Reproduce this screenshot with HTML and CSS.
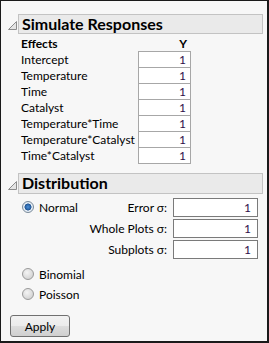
FILE: index.html
```html
<!DOCTYPE html>
<html>
<head>
<meta charset="utf-8">
<link rel="stylesheet" href="styles.css">
</head>
<body>
<div class="window">
  <div class="sec-head">
    <svg class="disclosure" width="9" height="9" viewBox="0 0 9 9"><polygon points="8.5,0.5 8.5,8.5 0.5,8.5" fill="#e4e4e4" stroke="#8c8c8c" stroke-width="1"/></svg>
    <div class="sec-title">Simulate Responses</div>
  </div>
  <div class="effects">
    <div class="eff-label bold">Effects</div><div class="eff-ycol bold">Y</div>
    <div class="eff-label">Intercept</div><div class="cell first">1</div>
    <div class="eff-label">Temperature</div><div class="cell">1</div>
    <div class="eff-label">Time</div><div class="cell">1</div>
    <div class="eff-label">Catalyst</div><div class="cell">1</div>
    <div class="eff-label">Temperature*Time</div><div class="cell">1</div>
    <div class="eff-label">Temperature*Catalyst</div><div class="cell">1</div>
    <div class="eff-label">Time*Catalyst</div><div class="cell">1</div>
  </div>
  <div class="sec-head dist-head">
    <svg class="disclosure" width="9" height="9" viewBox="0 0 9 9"><polygon points="8.5,0.5 8.5,8.5 0.5,8.5" fill="#e4e4e4" stroke="#8c8c8c" stroke-width="1"/></svg>
    <div class="sec-title">Distribution</div>
  </div>
  <div class="dist">
    <div class="radio-row normal"><span class="radio on"></span><span>Normal</span></div>
    <div class="params">
      <div class="p-label">Error σ:</div><div class="p-input">1</div>
      <div class="p-label">Whole Plots σ:</div><div class="p-input">1</div>
      <div class="p-label">Subplots σ:</div><div class="p-input">1</div>
    </div>
  </div>
  <div class="radio-row"><span class="radio"></span><span>Binomial</span></div>
  <div class="radio-row"><span class="radio"></span><span>Poisson</span></div>
  <div class="actions"><button class="apply">Apply</button></div>
</div>
</body>
</html>
```
FILE: styles.css
```css
html, body { margin: 0; padding: 0; }
body { background: #f7f7f7; }
.window {
  box-sizing: border-box;
  width: 269px;
  height: 343px;
  border-top: 1px solid #1a1a1a;
  border-left: 1px solid #1a1a1a;
  border-right: 2px solid #1a1a1a;
  border-bottom: 2px solid #1a1a1a;
  background: #f7f7f7;
  padding: 13px 4px 0 0;
  font-family: "Lato", "Liberation Sans", sans-serif;
  font-size: 12px;
  color: #000;
}
.sec-head {
  display: flex;
  align-items: center;
  height: 20px;
}
.disclosure { margin-left: 7px; margin-right: 1px; margin-top: 3px; flex: none; }
.sec-title {
  flex: 1;
  box-sizing: border-box;
  height: 20px;
  border: 1px solid #c3c3c3;
  background: #eaeaea;
  font-weight: bold;
  font-size: 16px;
  line-height: 18px;
  padding-left: 3px;
}
.effects {
  display: grid;
  grid-template-columns: 117px 53px;
  grid-auto-rows: 16px;
  padding-left: 20px;
  margin-top: 2px;
}
.eff-label { line-height: 16px; white-space: nowrap; }
.bold { font-weight: bold; }
.eff-ycol { text-align: right; padding-right: 4px; line-height: 16px; }
.cell {
  box-sizing: border-box;
  background: #fff;
  border: 1px solid #a7a7a7;
  border-top: none;
  text-align: right;
  padding-right: 4px;
  line-height: 15px;
  color: #30104a;
}
.cell.first { border-top: 1px solid #a7a7a7; }
.effects .cell.first { position: relative; top: -1px; height: 17px; }
.dist-head { margin-top: 9px; height: 21px; }
.dist-head .sec-title { height: 21px; }
.dist { display: flex; justify-content: space-between; margin-top: 4px; }
.radio-row { display: flex; align-items: center; gap: 5px; height: 20px; padding-left: 21px; }
.dist .normal { align-self: flex-start; height: 18px; }
.radio {
  box-sizing: border-box;
  width: 12px; height: 12px;
  border-radius: 50%;
  border: 1px solid #9a9a9a;
  background: radial-gradient(circle at 40% 35%, #f4f4f4 0%, #d6d6d6 70%, #c8c8c8 100%);
  flex: none;
}
.radio.on {
  border-color: #7a8a9a;
  background:
    radial-gradient(circle at 50% 50%, #4a8fd6 0, #2a64a8 2.5px, #1f4f8a 3.2px, #e6eef6 3.8px, #dfe7ef 100%);
}
.params {
  display: grid;
  grid-template-columns: auto 85px;
  column-gap: 6px;
  row-gap: 2px;
  grid-auto-rows: 19px;
  align-items: center;
  margin-right: 5px;
}
.p-label { text-align: right; white-space: nowrap; }
.p-input {
  box-sizing: border-box;
  height: 19px;
  border: 1px solid #7a7a7a;
  background: #fff;
  text-align: right;
  padding-right: 6px;
  line-height: 17px;
  color: #30104a;
}
.dist + .radio-row { margin-top: 5px; }
.actions { padding-left: 9px; margin-top: 11px; }
.apply {
  box-sizing: border-box;
  width: 60px; height: 22px;
  border: 1px solid #707070;
  border-radius: 3px;
  background: linear-gradient(#f2f2f2 0%, #ebebeb 50%, #dddddd 51%, #cfcfcf 100%);
  font-family: "Lato", "Liberation Sans", sans-serif;
  font-size: 12px;
  color: #000;
  padding: 0;
}
```
